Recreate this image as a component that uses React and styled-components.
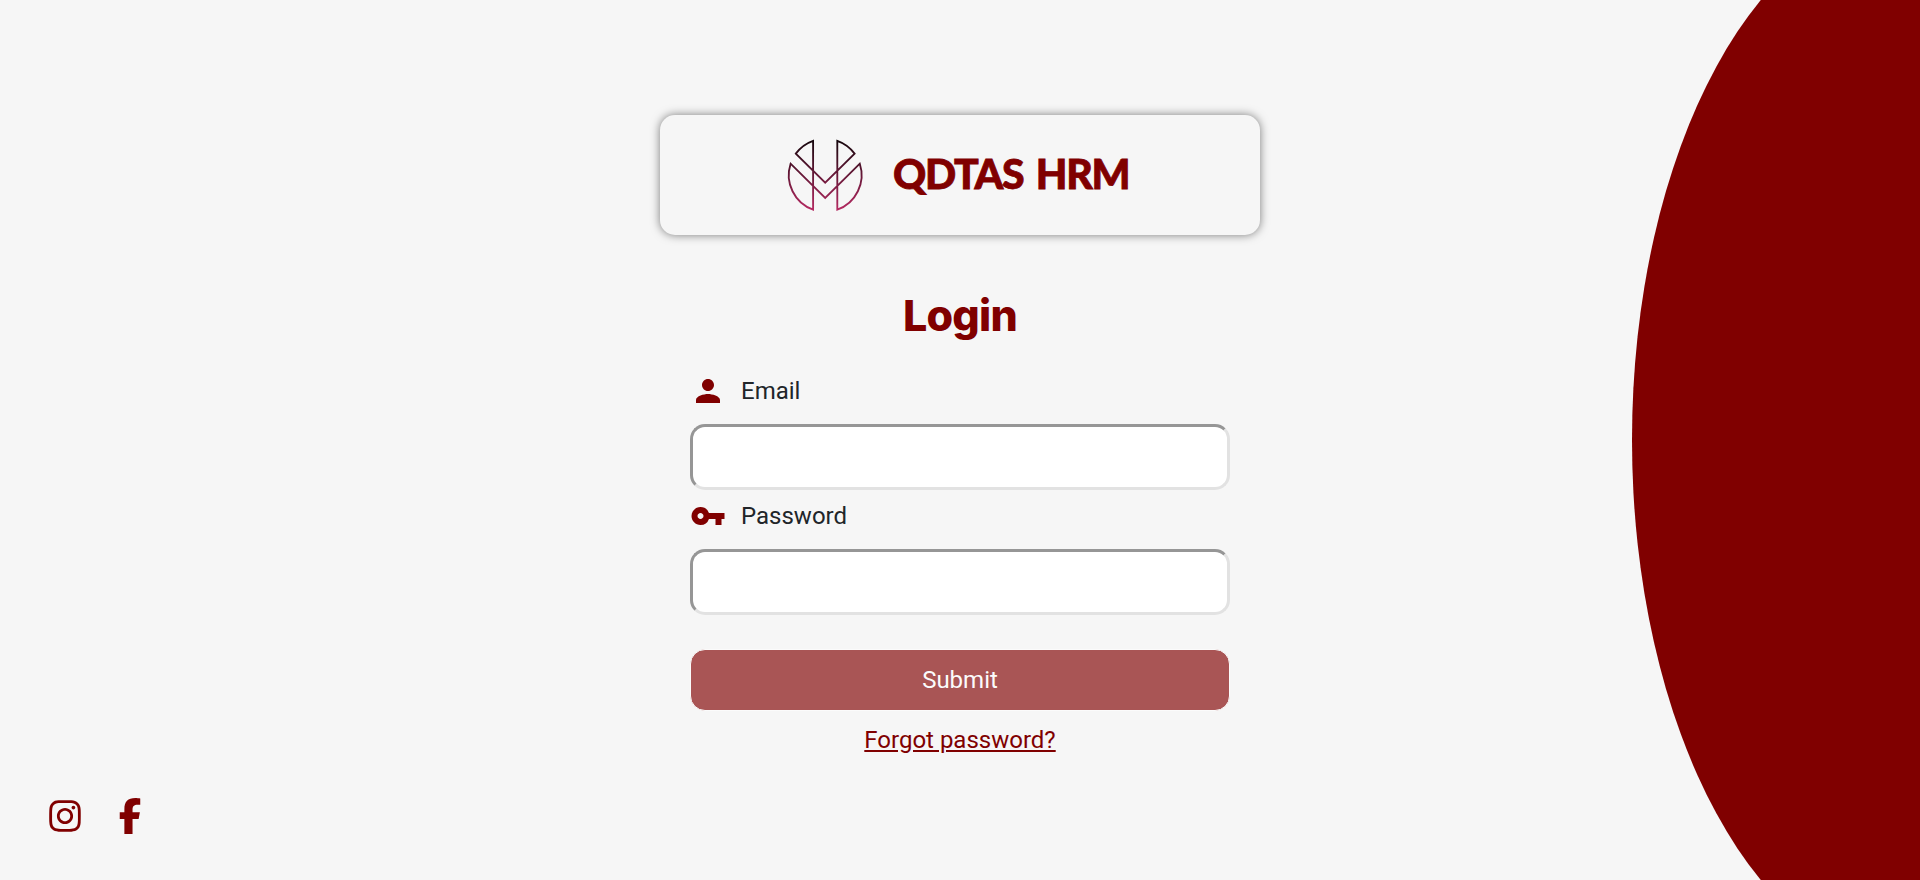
import React from "react";
import styled, { createGlobalStyle } from "styled-components";
import { MdPerson, MdVpnKey } from "react-icons/md";
import { FaInstagram, FaFacebookF } from "react-icons/fa6";

const MAROON = "#800000";

const GlobalStyle = createGlobalStyle`
  *, *::before, *::after { box-sizing: border-box; }
  body {
    margin: 0;
    background: #f6f6f6;
    color: #212529;
    font-family: Roboto, "Liberation Sans", sans-serif;
    font-size: 24px;
    line-height: 36px;
  }
`;

const Page = styled.div`
  display: grid;
  grid-template-columns: 15% 70% 15%;
  height: 100vh;
  overflow: hidden;
`;

const Side = styled.aside`
  display: flex;
  align-items: flex-end;
  padding: 0 0 46.5px 47px;
`;

const Social = styled.nav`
  display: flex;
  gap: 28.5px;
`;

const SocialLink = styled.a`
  display: flex;
  color: ${MAROON};
  font-size: 36px;
`;

const Curve = styled.div`
  background: ${MAROON};
  clip-path: ellipse(100% 60% at 100% 50%);
`;

const Main = styled.main`
  display: flex;
  flex-direction: column;
  align-items: center;
  padding-top: 115px;
`;

const Brand = styled.header`
  display: flex;
  align-items: center;
  width: 600px;
  height: 120px;
  padding-left: 124px;
  border-radius: 15px;
  box-shadow: 0 0 10px rgba(0, 0, 0, 0.5);
  background: #f6f6f6;
`;

const Logo = styled.svg`
  flex: none;
  width: 82px;
  height: 82px;
`;

const heading = `
  margin: 0;
  color: ${MAROON};
  white-space: nowrap;
`;

const BrandName = styled.h1`
  ${heading}
  margin: 0 0 3px 27px;
  font-family: Lato, "Liberation Sans", sans-serif;
  font-weight: 900;
  font-size: 41px;
  line-height: 50px;
  letter-spacing: -1.3px;
  word-spacing: 4px;
  -webkit-text-stroke: 0.8px ${MAROON};
`;

const Title = styled.h2`
  ${heading}
  margin-top: 54px;
  font-family: Inter, "Liberation Sans", sans-serif;
  font-weight: 800;
  font-size: 43px;
  line-height: 52px;
  letter-spacing: -0.8px;
`;

const Form = styled.form`
  display: flex;
  flex-direction: column;
  width: 540px;
  margin-top: 32px;
`;

const Label = styled.label`
  display: flex;
  align-items: center;
  gap: 15px;
  height: 36px;
  margin-bottom: 15px;

  svg {
    color: ${MAROON};
    font-size: 36px;
  }
`;

const Input = styled.input`
  width: 100%;
  height: 66px;
  margin: 0 0 8px;
  padding: 0 16px;
  border: 3px solid;
  border-color: #969696 #e2e2e2 #e2e2e2 #969696;
  border-radius: 15px;
  outline: none;
  background: #fff;
  font: inherit;
`;

const Submit = styled.button`
  height: 62px;
  margin-top: 26px;
  padding: 0;
  border: 1px solid #fff;
  border-radius: 15px;
  background: ${MAROON};
  color: #fff;
  font: inherit;
  opacity: 0.65;
`;

const Forgot = styled.a`
  align-self: center;
  margin-top: 11px;
  color: ${MAROON};
  text-decoration: underline;
`;

function BrandMark() {
  return (
    <Logo viewBox="0 0 82 82" fill="none" aria-hidden="true">
      <defs>
        <linearGradient id="mark" gradientUnits="userSpaceOnUse" x1="0" y1="6" x2="0" y2="76">
          <stop offset="0" stopColor="#15060c" />
          <stop offset="0.45" stopColor="#5e1633" />
          <stop offset="1" stopColor="#b52a62" />
        </linearGradient>
      </defs>
      <g stroke="url(#mark)" strokeWidth="1.85" strokeLinejoin="miter">
        <path d="M29.1 6.8V75.7A36.8 36.8 0 0 1 6.6 29.7L41.2 64L75.8 29.7A36.8 36.8 0 0 1 53.3 75.7V6.8A36.8 36.8 0 0 1 70.6 19.6L41.2 48.7L11.8 19.6A36.8 36.8 0 0 1 29.1 6.8Z" />
      </g>
    </Logo>
  );
}

export default function App() {
  return (
    <>
      <GlobalStyle />
      <Page>
        <Side>
          <Social>
            <SocialLink aria-label="Instagram"><FaInstagram /></SocialLink>
            <SocialLink aria-label="Facebook"><FaFacebookF /></SocialLink>
          </Social>
        </Side>
        <Main>
          <Brand>
            <BrandMark />
            <BrandName>QDTAS HRM</BrandName>
          </Brand>
          <Title>Login</Title>
          <Form>
            <Label htmlFor="email"><MdPerson />Email</Label>
            <Input id="email" type="email" />
            <Label htmlFor="password"><MdVpnKey />Password</Label>
            <Input id="password" type="password" />
            <Submit type="submit" disabled>Submit</Submit>
            <Forgot>Forgot password?</Forgot>
          </Form>
        </Main>
        <Curve />
      </Page>
    </>
  );
}
